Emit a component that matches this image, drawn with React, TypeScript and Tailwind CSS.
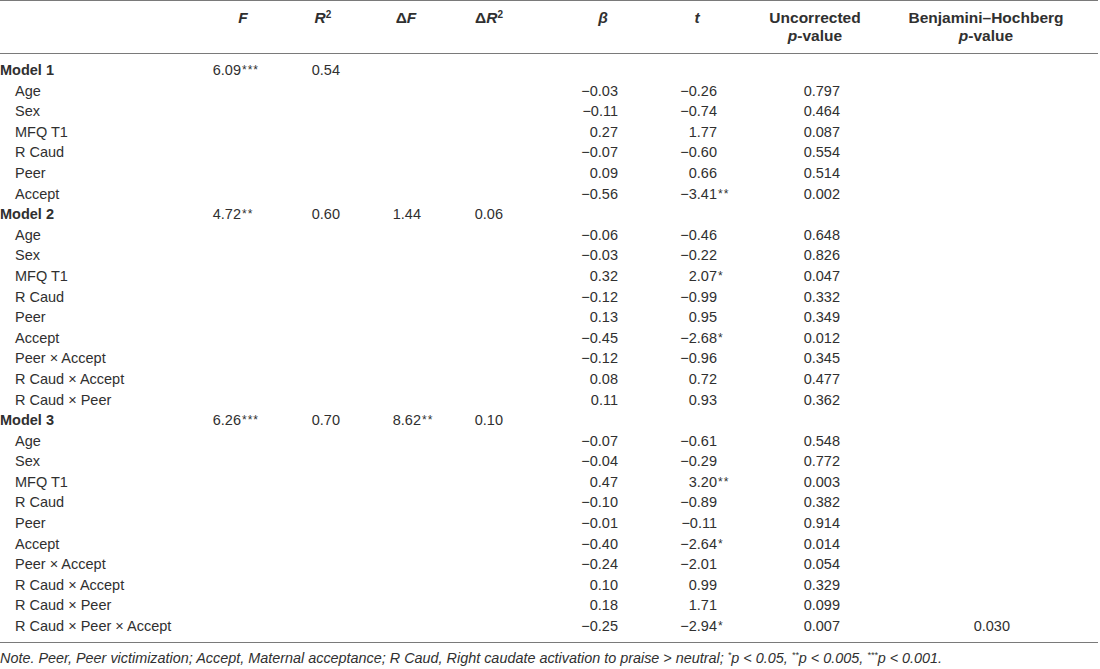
type Val = [string, string?]

type Row = {
  label: string
  model?: boolean
  f?: Val
  r2?: Val
  df?: Val
  dr2?: Val
  b?: Val
  t?: Val
  p?: Val
  bh?: Val
}

const rows: Row[] = [
  { label: 'Model 1', model: true, f: ['6.09', '***'], r2: ['0.54'] },
  { label: 'Age', b: ['−0.03'], t: ['−0.26'], p: ['0.797'] },
  { label: 'Sex', b: ['−0.11'], t: ['−0.74'], p: ['0.464'] },
  { label: 'MFQ T1', b: ['0.27'], t: ['1.77'], p: ['0.087'] },
  { label: 'R Caud', b: ['−0.07'], t: ['−0.60'], p: ['0.554'] },
  { label: 'Peer', b: ['0.09'], t: ['0.66'], p: ['0.514'] },
  { label: 'Accept', b: ['−0.56'], t: ['−3.41', '**'], p: ['0.002'] },
  { label: 'Model 2', model: true, f: ['4.72', '**'], r2: ['0.60'], df: ['1.44'], dr2: ['0.06'] },
  { label: 'Age', b: ['−0.06'], t: ['−0.46'], p: ['0.648'] },
  { label: 'Sex', b: ['−0.03'], t: ['−0.22'], p: ['0.826'] },
  { label: 'MFQ T1', b: ['0.32'], t: ['2.07', '*'], p: ['0.047'] },
  { label: 'R Caud', b: ['−0.12'], t: ['−0.99'], p: ['0.332'] },
  { label: 'Peer', b: ['0.13'], t: ['0.95'], p: ['0.349'] },
  { label: 'Accept', b: ['−0.45'], t: ['−2.68', '*'], p: ['0.012'] },
  { label: 'Peer × Accept', b: ['−0.12'], t: ['−0.96'], p: ['0.345'] },
  { label: 'R Caud × Accept', b: ['0.08'], t: ['0.72'], p: ['0.477'] },
  { label: 'R Caud × Peer', b: ['0.11'], t: ['0.93'], p: ['0.362'] },
  { label: 'Model 3', model: true, f: ['6.26', '***'], r2: ['0.70'], df: ['8.62', '**'], dr2: ['0.10'] },
  { label: 'Age', b: ['−0.07'], t: ['−0.61'], p: ['0.548'] },
  { label: 'Sex', b: ['−0.04'], t: ['−0.29'], p: ['0.772'] },
  { label: 'MFQ T1', b: ['0.47'], t: ['3.20', '**'], p: ['0.003'] },
  { label: 'R Caud', b: ['−0.10'], t: ['−0.89'], p: ['0.382'] },
  { label: 'Peer', b: ['−0.01'], t: ['−0.11'], p: ['0.914'] },
  { label: 'Accept', b: ['−0.40'], t: ['−2.64', '*'], p: ['0.014'] },
  { label: 'Peer × Accept', b: ['−0.24'], t: ['−2.01'], p: ['0.054'] },
  { label: 'R Caud × Accept', b: ['0.10'], t: ['0.99'], p: ['0.329'] },
  { label: 'R Caud × Peer', b: ['0.18'], t: ['1.71'], p: ['0.099'] },
  { label: 'R Caud × Peer × Accept', b: ['−0.25'], t: ['−2.94', '*'], p: ['0.007'], bh: ['0.030'] },
]

// number right-aligned in a fixed box so decimals line up, stars hang after it
const Num = ({ v, pad }: { v?: Val; pad: string }) => (
  <div className={`flex ${pad}`}>
    {v && (
      <>
        <span className="inline-block w-[40px] text-right">{v[0]}</span>
        <span className="inline-block pt-[4px] pl-[1px] text-[12px] leading-[12px] tracking-[1px]">{v[1] ?? ''}</span>
      </>
    )}
  </div>
)

const Sup = ({ children }: { children: string }) => (
  <sup className="text-[10px]">{children}</sup>
)

export default function App() {
  return (
    <div className="w-[1100px] h-[669px] bg-white text-[#303030] text-[14.5px] font-['Liberation_Sans',Arial,sans-serif]">
      <div className="w-[1098px] border-t border-b border-[#7a7a7a]">
        <div className="flex h-[52px] pt-[8px] text-[15.5px] font-bold leading-[18px]">
          <div className="w-[200px]" />
          <div className="w-[86px] text-center italic">F</div>
          <div className="w-[74px] text-center">
            <span className="italic">R</span>
            <Sup>2</Sup>
          </div>
          <div className="w-[92px] text-center">
            Δ<span className="italic">F</span>
          </div>
          <div className="w-[88px] pr-[14px] text-center">
            Δ<span className="italic">R</span>
            <Sup>2</Sup>
          </div>
          <div className="w-[120px] pl-[6px] text-center italic">β</div>
          <div className="w-[90px] pr-[16px] text-center italic">t</div>
          <div className="w-[150px] pr-[20px] text-center">
            Uncorrected
            <br />
            <span className="italic">p</span>-value
          </div>
          <div className="w-[198px] pr-[26px] text-center">
            Benjamini–Hochberg
            <br />
            <span className="italic">p</span>-value
          </div>
        </div>
      </div>
      <div className="w-[1098px] border-b border-[#7a7a7a] pt-[6px] pb-[5px]">
        {rows.map((r, i) => (
          <div key={i} className="flex h-[20.6px] leading-[20.6px]">
            <div className={`w-[200px] ${r.model ? 'font-bold' : 'pl-[15px]'}`}>{r.label}</div>
            <div className="w-[86px]">
              <Num v={r.f} pad="pl-[1px]" />
            </div>
            <div className="w-[74px]">
              <Num v={r.r2} pad="pl-[14px]" />
            </div>
            <div className="w-[92px]">
              <Num v={r.df} pad="pl-[21px]" />
            </div>
            <div className="w-[88px]">
              <Num v={r.dr2} pad="pl-[11px]" />
            </div>
            <div className="w-[120px]">
              <Num v={r.b} pad="pl-[38px]" />
            </div>
            <div className="w-[90px]">
              <Num v={r.t} pad="pl-[17px]" />
            </div>
            <div className="w-[150px]">
              <Num v={r.p} pad="pl-[50px]" />
            </div>
            <div className="w-[198px]">
              <Num v={r.bh} pad="pl-[70px]" />
            </div>
          </div>
        ))}
      </div>
      <p className="pt-[7px] text-[14.4px] italic leading-[16px]">
        Note. Peer, Peer victimization; Accept, Maternal acceptance; R Caud, Right caudate activation to praise &gt;
        neutral; <sup className="text-[9px]">*</sup>p &lt; 0.05, <sup className="text-[9px]">**</sup>p &lt; 0.005,{' '}
        <sup className="text-[9px]">***</sup>p &lt; 0.001.
      </p>
    </div>
  )
}
